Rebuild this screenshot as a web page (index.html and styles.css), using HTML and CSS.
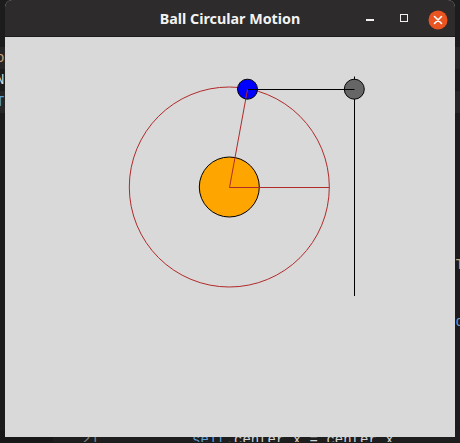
FILE: index.html
```html
<!DOCTYPE html>
<html>
<head>
<meta charset="utf-8">
<link rel="stylesheet" href="styles.css">
</head>
<body>
<div class="editor">
  <div class="line band"><span class="frag-left tan">o</span></div>
  <div class="line"><span class="frag-left white">N</span></div>
  <div class="line band"><span class="frag-left blue">T</span></div>
  <div class="gap1"></div>
  <div class="line right"><span class="frag-right tan">T</span></div>
  <div class="gap2"></div>
  <div class="line right"><span class="frag-right blue">d</span></div>
  <div class="gap3"></div>
  <div class="line last"><span class="lineno">21</span><span class="code"><span class="blue">self</span>.center_x = center_x</span></div>
</div>

<div class="window">
  <div class="titlebar">
    <span class="title">Ball Circular Motion</span>
    <div class="controls">
      <span class="btn min"><span class="min-bar"></span></span>
      <span class="btn max"><span class="max-box"></span></span>
      <span class="btn close">
        <svg width="20" height="20" viewBox="0 0 20 20"><circle cx="10" cy="10" r="9.5" fill="#e95420"/><path d="M6.5 6.5 L13.5 13.5 M13.5 6.5 L6.5 13.5" stroke="#fff" stroke-width="1.6" stroke-linecap="round"/></svg>
      </span>
    </div>
  </div>
  <svg class="canvas" width="450" height="400" viewBox="0 0 450 400">
    <circle cx="224.3" cy="150" r="100" fill="none" stroke="#b02a2a" stroke-width="1"/>
    <circle cx="224.3" cy="150" r="30" fill="#ffa500" stroke="#000" stroke-width="1"/>
    <line x1="224.5" y1="150.5" x2="324.5" y2="150.5" stroke="#b02a2a" stroke-width="1"/>
    <line x1="224.5" y1="150.5" x2="242.5" y2="52.5" stroke="#b02a2a" stroke-width="1"/>
    <line x1="349.5" y1="39.5" x2="349.5" y2="259" stroke="#000" stroke-width="1"/>
    <circle cx="242.5" cy="52.2" r="10" fill="#0000ff" stroke="#000" stroke-width="1"/>
    <circle cx="349.3" cy="52.2" r="10" fill="#666666" stroke="#000" stroke-width="1"/>
    <line x1="242.5" y1="52.5" x2="349.5" y2="52.5" stroke="#000" stroke-width="1"/>
    <line x1="242.5" y1="52.5" x2="240.8" y2="61.5" stroke="#b02a2a" stroke-width="1"/>
  </svg>
</div>
</body>
</html>
```

FILE: styles.css
```css
html, body {
  margin: 0;
  padding: 0;
}
body {
  width: 460px;
  height: 443px;
  overflow: hidden;
  position: relative;
  background: #1c1c1c;
  font-family: "Liberation Mono", monospace;
  font-size: 14px;
}
.editor {
  display: flex;
  flex-direction: column;
  padding-top: 47px;
  height: 443px;
  box-sizing: border-box;
  overflow: hidden;
}
.line {
  height: 22px;
  line-height: 22px;
  white-space: pre;
  display: flex;
  flex: none;
}
.band {
  background: #262626;
}
.line.right {
  justify-content: flex-end;
}
.frag-left {
  margin-left: -4px;
}
.frag-right {
  margin-right: -4px;
}
.gap1 { height: 141px; flex: none; }
.gap2 { height: 35px; flex: none; }
.gap3 { height: 97px; flex: none; }
.line.last {
  height: 12px;
  line-height: 20px;
  overflow: hidden;
  align-items: flex-start;
  background: linear-gradient(to right, #181818 0 53px, #1e1e1e 53px);
}
.lineno {
  color: #858585;
  margin-left: 82px;
  width: 110px;
}
.code {
  color: #d4d4d4;
}
.tan { color: #c8a07a; }
.white { color: #d8d8d8; }
.blue { color: #5e9fd8; }

.window {
  position: absolute;
  left: 5px;
  top: 0;
  width: 450px;
  height: 437px;
  display: flex;
  flex-direction: column;
  border-radius: 7px 7px 0 0;
  overflow: hidden;
  background: #d9d9d9;
}
.titlebar {
  height: 36px;
  flex: none;
  background: #2d2b2b;
  border-bottom: 1px solid #1e1d1d;
  position: relative;
  display: flex;
  align-items: center;
  justify-content: center;
}
.title {
  font-family: "Noto Sans", "DejaVu Sans", sans-serif;
  font-weight: bold;
  font-size: 14.3px;
  color: #f2f2f2;
  margin-top: 1px;
}
.controls {
  position: absolute;
  right: 7.5px;
  top: 9.5px;
  display: flex;
  gap: 14px;
}
.btn {
  width: 20px;
  height: 20px;
  flex: none;
  display: flex;
  align-items: center;
  justify-content: center;
}
.min-bar {
  width: 8px;
  height: 1.5px;
  background: #f0f0f0;
  margin-top: 1px;
}
.max-box {
  width: 6px;
  height: 6px;
  border: 1.5px solid #f0f0f0;
  margin-top: -3px;
}
.close svg {
  display: block;
}
.canvas {
  display: block;
  flex: none;
  background: #d9d9d9;
}
```
